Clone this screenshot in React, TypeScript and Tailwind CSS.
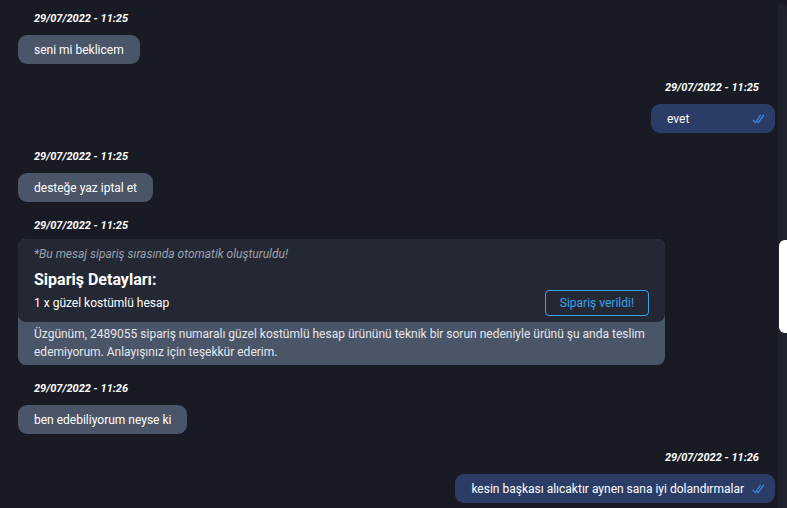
import React from "react";

type Msg = {
  time: string;
  text: string;
  mine?: boolean;
};

const font = { fontFamily: "Roboto, 'Noto Sans', sans-serif" };

function DoubleCheck() {
  return (
    <svg width="13" height="10" viewBox="0 0 13 10" fill="none" className="shrink-0">
      <path d="M1 6.2 L3.4 8.6 L8.4 1.2" stroke="#3b8ee8" strokeWidth="1.2" strokeLinecap="round" strokeLinejoin="round" />
      <path d="M5.2 7.6 L6.2 8.6 L11.6 1.2" stroke="#3b8ee8" strokeWidth="1.2" strokeLinecap="round" strokeLinejoin="round" />
    </svg>
  );
}

function Stamp({ time }: { time: string }) {
  return (
    <div className="px-4 text-[11px] leading-4 font-bold italic text-white">{time}</div>
  );
}

function Bubble({ msg }: { msg: Msg }) {
  if (msg.mine) {
    return (
      <div className="flex flex-col items-end">
        <Stamp time={msg.time} />
        <div className="mt-2 flex h-[29px] min-w-[124px] items-center justify-between gap-2 rounded-[9px] bg-[#2b3c66] pl-4 pr-[10px] text-[12px] text-white">
          <span>{msg.text}</span>
          <DoubleCheck />
        </div>
      </div>
    );
  }
  return (
    <div className="flex flex-col items-start">
      <Stamp time={msg.time} />
      <div className="mt-2 flex h-[29px] items-center rounded-[9px] bg-[#4a5568] px-4 text-[12px] text-white">
        {msg.text}
      </div>
    </div>
  );
}

function OrderCard() {
  return (
    <div className="flex flex-col items-start">
      <Stamp time="29/07/2022 - 11:25" />
      <div className="mt-[5px] w-[647px] rounded-lg bg-[#4a5568]">
        <div className="rounded-lg bg-[#242834] px-4 pt-[7px] pb-[6px]">
          <div className="text-[12px] leading-4 italic text-[#9ca3af]">
            *Bu mesaj sipariş sırasında otomatik oluşturuldu!
          </div>
          <div className="mt-2 text-base leading-5 font-bold text-white">Sipariş Detayları:</div>
          <div className="flex h-[26px] items-center justify-between">
            <span className="text-[12px] text-white">1 x güzel kostümlü hesap</span>
            <button className="h-[26px] rounded border border-[#38a3e8] px-[14px] text-[12px] text-[#38a3e8]">
              Sipariş verildi!
            </button>
          </div>
        </div>
        <div className="px-4 pt-[3px] pb-[4px] text-[12px] leading-[18px] text-[#e5e7eb]">
          Üzgünüm, 2489055 sipariş numaralı güzel kostümlü hesap ürününü teknik bir sorun nedeniyle ürünü şu anda teslim edemiyorum. Anlayışınız için teşekkür ederim.
        </div>
      </div>
    </div>
  );
}

export default function App() {
  return (
    <main className="flex h-screen w-full overflow-hidden bg-[#181b24]" style={font}>
      <div className="flex flex-1 flex-col gap-4 pt-[11px] pl-[18px] pr-[3px]">
        <Bubble msg={{ time: "29/07/2022 - 11:25", text: "seni mi beklicem" }} />
        <Bubble msg={{ time: "29/07/2022 - 11:25", text: "evet", mine: true }} />
        <Bubble msg={{ time: "29/07/2022 - 11:25", text: "desteğe yaz iptal et" }} />
        <OrderCard />
        <Bubble msg={{ time: "29/07/2022 - 11:26", text: "ben edebiliyorum neyse ki" }} />
        <Bubble msg={{ time: "29/07/2022 - 11:26", text: "kesin başkası alıcaktır aynen sana iyi dolandırmalar", mine: true }} />
      </div>
      {/* scrollbar */}
      <div className="flex w-[9px] flex-col pt-1">
        <div className="flex flex-1 flex-col rounded-t-md bg-[#1f232d]">
          <div className="ml-px mt-[236px] h-[93px] rounded-l-md bg-white"></div>
        </div>
      </div>
    </main>
  );
}
